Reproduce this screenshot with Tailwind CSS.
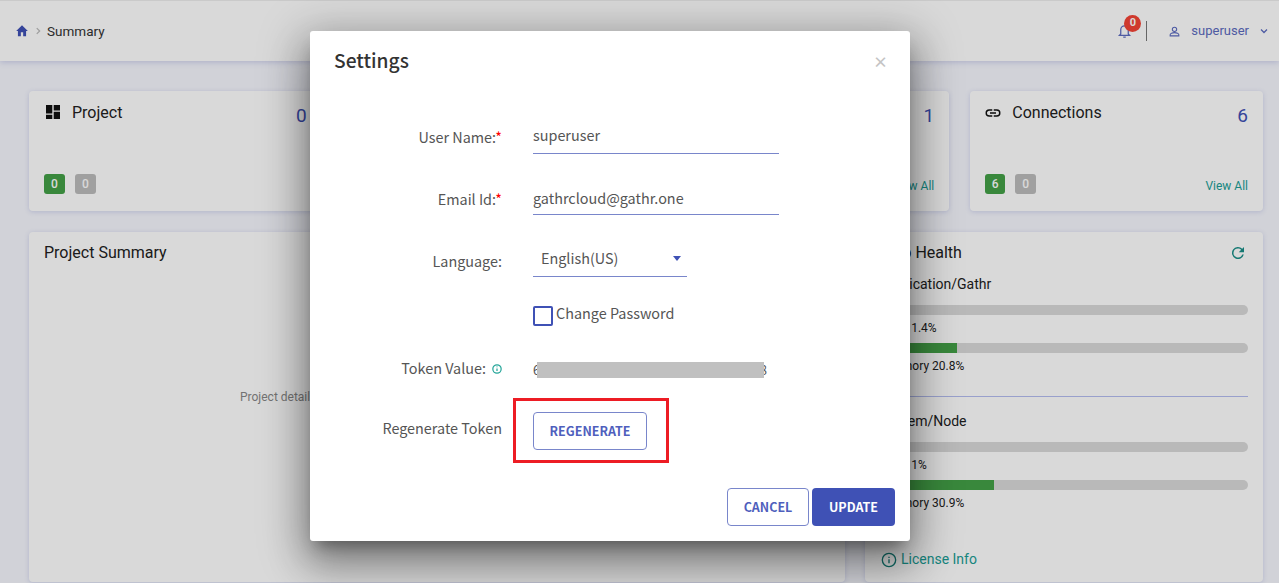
<!DOCTYPE html>
<html lang="en">
<head>
    <meta charset="UTF-8">
    <meta name="viewport" content="width=device-width, initial-scale=1.0">
    <title>Summary</title>
    <script src="https://cdn.jsdelivr.net/npm/@tailwindcss/browser@4"></script>
</head>
<body class="relative h-[583px] overflow-hidden bg-[#f6f7fe] font-['Roboto',sans-serif] text-[#222]">
    <!-- top bar -->
    <header class="flex h-[61px] items-center justify-between border-t border-[#eee] bg-white pl-[15px] pr-[9px] shadow-[0_1px_6px_rgba(63,81,181,0.25)]">
        <div class="flex items-center text-[13.5px] text-[#333]">
            <svg class="h-[14px] w-[14px] text-[#3f51b5]" viewBox="0 0 24 24" fill="currentColor"><path d="M10 21v-7h4v7h5v-9h3L12 2 2 12h3v9z"/></svg>
            <svg class="ml-[4px] h-[10px] w-[10px] text-[#bbb]" viewBox="0 0 24 24" fill="none" stroke="currentColor" stroke-width="3"><path d="M9 5l7 7-7 7"/></svg>
            <span class="ml-[4px]">Summary</span>
        </div>
        <div class="flex items-center text-[#5c6bc0]">
            <div class="relative mr-[14px]">
                <svg class="h-[15px] w-[15px]" viewBox="0 0 24 24" fill="none" stroke="currentColor" stroke-width="2"><path d="M12 3a6 6 0 0 0-6 6v7l-2 2h16l-2-2V9a6 6 0 0 0-6-6z"/><path d="M10 21h4"/></svg>
                <span class="absolute -top-[9px] left-[7px] flex h-[17px] w-[17px] items-center justify-center rounded-full bg-[#f44336] text-[11px] font-bold text-white">0</span>
            </div>
            <div class="mr-[21px] h-[20px] w-px bg-[#777]"></div>
            <svg class="h-[13px] w-[13px]" viewBox="0 0 24 24" fill="none" stroke="currentColor" stroke-width="2"><circle cx="12" cy="8" r="4"/><path d="M4 20v-2c0-2 4-4 8-4s8 2 8 4v2z"/></svg>
            <span class="ml-[10px] text-[13px]">superuser</span>
            <svg class="ml-[9px] h-[12px] w-[12px]" viewBox="0 0 24 24" fill="none" stroke="currentColor" stroke-width="2.5"><path d="M6 9l6 6 6-6"/></svg>
        </div>
    </header>

    <!-- dashboard -->
    <main class="pl-[29px] pr-4 pt-[30px]">
        <section class="grid grid-cols-4 gap-[21px]">
            <div class="relative h-[120px] rounded bg-white px-[15px] pt-[6px] shadow-[0_1px_5px_rgba(63,81,181,0.2)]">
                <div class="flex items-start justify-between">
                    <div class="flex items-center text-[16px] leading-[32px]">
                        <svg class="-mt-[2px] ml-[2px] h-[14px] w-[14px] text-[#111]" viewBox="0 0 14 14" fill="currentColor"><path d="M0 0h6.3v8.5H0zM7.7 0H14v5.5H7.7zM7.7 6.8H14V14H7.7zM0 9.8h6.3V14H0z"/></svg>
                        <span class="ml-[12px]">Project</span>
                    </div>
                    <span class="mt-[5px] text-[19px] text-[#3f51b5]">0</span>
                </div>
                <div class="absolute bottom-[17px] left-[15px] flex gap-[10px] text-[12px] font-medium">
                    <span class="flex h-[20px] w-[21px] items-center justify-center rounded-[3px] bg-[#43a047] text-white">0</span>
                    <span class="flex h-[20px] w-[21px] items-center justify-center rounded-[3px] bg-[#bdbdbd] text-white">0</span>
                </div>
            </div>
            <div class="h-[120px] rounded bg-white"></div>
            <div class="relative h-[120px] rounded bg-white px-[15px] pt-[6px] shadow-[0_1px_5px_rgba(63,81,181,0.2)]">
                <div class="flex justify-end"><span class="mt-[5px] text-[19px] text-[#3f51b5]">1</span></div>
                <a class="absolute bottom-[16px] right-[15px] text-[12px] text-[#1a9e96]">View All</a>
            </div>
            <div class="relative h-[120px] rounded bg-white px-[15px] pt-[6px] shadow-[0_1px_5px_rgba(63,81,181,0.2)]">
                <div class="flex items-start justify-between">
                    <div class="flex items-center text-[16px] leading-[32px]">
                        <svg class="-ml-px h-[18px] w-[18px] text-[#111]" viewBox="0 0 24 24" fill="currentColor"><path d="M3.9 12c0-1.7 1.4-3.1 3.1-3.1h4V7H7a5 5 0 0 0 0 10h4v-1.9H7A3.1 3.1 0 0 1 3.9 12zM8 13h8v-2H8zm9-6h-4v1.9h4a3.1 3.1 0 0 1 0 6.2h-4V17h4a5 5 0 0 0 0-10z"/></svg>
                        <span class="ml-[10px]">Connections</span>
                    </div>
                    <span class="mt-[5px] text-[19px] text-[#3f51b5]">6</span>
                </div>
                <div class="absolute bottom-[17px] left-[15px] flex gap-[10px] text-[12px] font-medium">
                    <span class="flex h-[20px] w-[20px] items-center justify-center rounded-[3px] bg-[#43a047] text-white">6</span>
                    <span class="flex h-[20px] w-[21px] items-center justify-center rounded-[3px] bg-[#bdbdbd] text-white">0</span>
                </div>
                <a class="absolute bottom-[16px] right-[15px] text-[12px] text-[#1a9e96]">View All</a>
            </div>
        </section>

        <section class="mt-[21px] flex gap-[20px]">
            <div class="flex h-[350px] w-[816px] flex-col rounded bg-white px-[15px] pt-[9px] shadow-[0_1px_5px_rgba(63,81,181,0.2)]">
                <h2 class="text-[16px]">Project Summary</h2>
                <p class="ml-[196px] mt-[123px] text-[12px] text-[#888]">Project details</p>
            </div>
            <div class="relative h-[350px] w-[398px] rounded bg-white pl-4 pr-[15px] pt-[9px] shadow-[0_1px_5px_rgba(63,81,181,0.2)]">
                <div class="flex items-center justify-between">
                    <h2 class="ml-[2px] text-[16px]">App Health</h2>
                    <svg class="mr-px h-[18px] w-[18px] text-[#1a8f88]" viewBox="0 0 24 24" fill="currentColor"><path d="M17.65 6.35A8 8 0 1 0 19.73 14h-2.08A6 6 0 1 1 12 6c1.66 0 3.14.69 4.22 1.78L13 11h7V4z"/></svg>
                </div>
                <p class="mt-[9px] text-[14px] leading-[20px]">Application/Gathr</p>
                <div class="mt-[11px] h-[10px] overflow-hidden rounded-full bg-[#dadada]"><div class="h-full bg-[#43a047]" style="width:1.4%"></div></div>
                <p class="mt-[6px] pl-[4px] text-[12px] leading-[14px]">CPU 1.4%</p>
                <div class="mt-[8px] h-[10px] overflow-hidden rounded-full bg-[#dadada]"><div class="h-full bg-[#43a047]" style="width:20.8%"></div></div>
                <p class="mt-[6px] pl-[4px] text-[12px] leading-[14px]">Memory 20.8%</p>
                <div class="mt-[23px] h-px bg-[#b4bcf0]"></div>
                <p class="mt-[14px] text-[14px] leading-[20px]">System/Node</p>
                <div class="mt-[11px] h-[10px] overflow-hidden rounded-full bg-[#dadada]"><div class="h-full bg-[#43a047]" style="width:1%"></div></div>
                <p class="mt-[6px] pl-[4px] text-[12px] leading-[14px]">CPU 1%</p>
                <div class="mt-[8px] h-[10px] overflow-hidden rounded-full bg-[#dadada]"><div class="h-full bg-[#43a047]" style="width:30.9%"></div></div>
                <p class="mt-[6px] pl-[4px] text-[12px] leading-[14px]">Memory 30.9%</p>
                <div class="mt-[39px] flex items-center text-[14px] text-[#1a9e96]">
                    <svg class="h-[16px] w-[16px] text-[#14807a]" viewBox="0 0 24 24" fill="none" stroke="currentColor" stroke-width="2"><circle cx="12" cy="12" r="10"/><path d="M12 11v6M12 7v2"/></svg>
                    <span class="ml-[4px]">License Info</span>
                </div>
            </div>
        </section>
    </main>

    <!-- settings dialog -->
    <div class="absolute inset-0 bg-black/15">
        <div class="relative ml-[310px] mt-[31px] h-[510px] w-[600px] rounded-[3px] bg-white font-['Noto_Sans_CJK_SC','Noto_Sans',sans-serif] text-[14.4px] text-[#555] shadow-[0_11px_15px_-7px_rgba(0,0,0,0.35),0_24px_38px_3px_rgba(0,0,0,0.25),0_9px_46px_8px_rgba(0,0,0,0.25)]">
            <div class="flex h-[90px] items-start justify-between pl-6 pr-[22px] pt-[14px]">
                <h2 class="text-[19.2px] leading-[30px] font-medium text-[#333]">Settings</h2>
                <span class="mt-[2px] text-[15px] leading-[30px] font-bold text-[#c4c4c4]">×</span>
            </div>

            <div class="flex h-[33px] items-center">
                <label class="mb-[2px] w-[192px] text-right">User Name:<span class="text-[#f00]">*</span></label>
                <input class="ml-[31px] h-[33px] w-[246px] border-b border-[#7986cb] pb-[6px] outline-none" value="superuser">
            </div>
            <div class="mt-[28px] flex h-[33px] items-center">
                <label class="w-[192px] text-right">Email Id:<span class="text-[#f00]">*</span></label>
                <input class="ml-[31px] h-[33px] w-[246px] border-b border-[#7986cb] pb-[2px] outline-none" value="gathrcloud@gathr.one">
            </div>
            <div class="mt-[29px] flex h-[33px] items-center">
                <label class="w-[192px] text-right">Language:</label>
                <div class="ml-[31px] flex h-[33px] w-[154px] items-center justify-between border-b border-[#7986cb] pb-[4px] pl-2 pr-[6px]">
                    <span>English(US)</span>
                    <span class="h-0 w-0 border-x-[4px] border-t-[5px] border-x-transparent border-t-[#3f51b5]"></span>
                </div>
            </div>
            <div class="ml-[223px] mt-[29px] flex h-[22px] items-start">
                <span class="h-[20px] w-[20px] rounded-[2px] border-2 border-[#3f51b5]"></span>
                <span class="ml-[3px] -mt-[4px]">Change Password</span>
            </div>
            <div class="mt-[29px] flex h-[22px] items-center">
                <label class="mb-[1px] w-[176px] text-right">Token Value:</label>
                <svg class="ml-[6px] mt-[2px] h-[10px] w-[10px] text-[#26a69a]" viewBox="0 0 24 24" fill="none" stroke="currentColor" stroke-width="3"><circle cx="12" cy="12" r="10"/><path d="M12 11v6M12 6v2"/></svg>
                <div class="relative ml-[31px] mt-[3px] w-[234px] text-[13px]">
                    <span class="flex justify-between"><span>6</span><span>8</span></span>
                    <span class="absolute left-[4px] top-[2px] h-[16px] w-[227px] bg-[#c0c0c0]"></span>
                </div>
            </div>
            <div class="mt-[33px] flex h-[38px] items-center">
                <label class="mb-[6px] w-[192px] text-right">Regenerate Token</label>
                <button class="ml-[31px] h-[38px] w-[114px] rounded-[4px] border border-[#7986cb] text-[12.5px] font-semibold text-[#4f5fbd]">REGENERATE</button>
            </div>

            <div class="mt-[38px] flex justify-end gap-[3px] pr-[15px] text-[12.5px] font-semibold">
                <button class="h-[38px] w-[82px] rounded-[4px] border border-[#7986cb] text-[#4f5fbd]">CANCEL</button>
                <button class="h-[38px] w-[83px] rounded-[4px] bg-[#3f51b5] text-white">UPDATE</button>
            </div>

            <!-- red highlight drawn over the dialog -->
            <div class="absolute left-[203px] top-[367px] h-[65px] w-[156px] border-[3px] border-[#ed1c24]"></div>
        </div>
    </div>
</body>
</html>
